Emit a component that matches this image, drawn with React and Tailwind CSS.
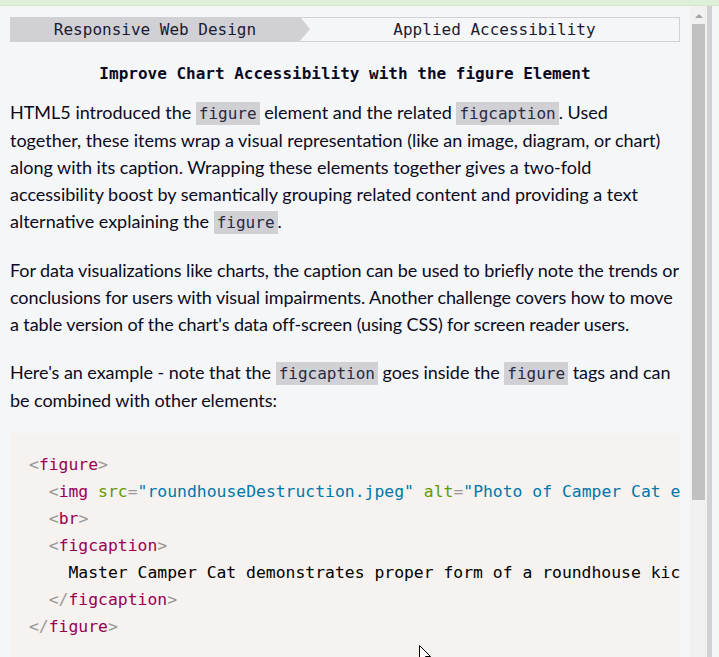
import React from 'react'

const mono = { fontFamily: '"DejaVu Sans Mono", "Liberation Mono", monospace' }

const Code = ({ children }) => (
  <code
    className="bg-[#d0d0d5] text-[#2a2a40] text-[16px] px-[3px] py-[2px] tracking-normal"
    style={mono}
  >
    {children}
  </code>
)

const P = ({ children }) => (
  <span className="text-[#999999]">{children}</span>
)
const Tag = ({ children }) => <span className="text-[#990055]">{children}</span>
const Attr = ({ children }) => <span className="text-[#669900]">{children}</span>
const Val = ({ children }) => <span className="text-[#0077aa]">{children}</span>

const App = () => {
  return (
    <div className="relative h-[657px] w-[719px] overflow-hidden bg-[#f5f6f7] flex flex-col">
      <div className="h-[6px] bg-[#dff0d8] border-b border-[#d3e8c8]" />
      <div className="flex flex-1 min-h-0">
        <main className="w-[690px] px-[10px] pt-[11px] overflow-hidden text-[#0a0a23]">
          {/* Breadcrumb */}
          <nav className="flex h-[25px] text-[16px]" style={mono}>
            <div className="relative w-[290px] bg-[#d0d0d5] flex items-center justify-center text-[#1b1b32]">
              <span>Responsive Web Design</span>
              <span className="absolute right-[-10px] top-0 h-0 w-0 border-y-[12.5px] border-y-transparent border-l-[10px] border-l-[#d0d0d5]" />
            </div>
            <div className="flex-1 border-y border-r border-[#d0d0d5] flex items-center justify-center pl-[10px] text-[#1b1b32]">
              <span>Applied Accessibility</span>
            </div>
          </nav>

          {/* Title */}
          <h1
            className="mt-[20px] text-center text-[16px] leading-[24px] font-bold"
            style={mono}
          >
            Improve Chart Accessibility with the figure Element
          </h1>

          {/* Description */}
          <div
            className="mt-[13px] text-[18px] leading-[27px]"
            style={{ fontFamily: 'Lato, "Noto Sans", sans-serif' }}
          >
            <p className="mb-[21px]">
              HTML5 introduced the <Code>figure</Code> element and the related <Code>figcaption</Code>. Used together, these items wrap a visual representation (like an image, diagram, or chart) along with its caption. Wrapping these elements together gives a two-fold accessibility boost by semantically grouping related content and providing a text alternative explaining the <Code>figure</Code>.
            </p>
            <p className="mb-[21px] tracking-[-0.09px]">
              For data visualizations like charts, the caption can be used to briefly note the trends or conclusions for users with visual impairments. Another challenge covers how to move a table version of the chart's data off-screen (using CSS) for screen reader users.
            </p>
            <p className="mb-[19px] tracking-[-0.05px]">
              Here's an example - note that the <Code>figcaption</Code> goes inside the <Code>figure</Code> tags and can be combined with other elements:
            </p>
          </div>

          {/* Code example */}
          <pre
            className="bg-[#f5f2f0] pt-[18px] pb-[18px] pl-[19px] overflow-hidden whitespace-pre text-[16.4px] leading-[27px] text-black"
            style={mono}
          >
            <P>&lt;</P><Tag>figure</Tag><P>&gt;</P>{'\n'}
            {'  '}<P>&lt;</P><Tag>img</Tag> <Attr>src</Attr><P>=</P><Val>"roundhouseDestruction.jpeg"</Val> <Attr>alt</Attr><P>=</P><Val>"Photo of Camper Cat executing a roundhouse kick"</Val><P>&gt;</P>{'\n'}
            {'  '}<P>&lt;</P><Tag>br</Tag><P>&gt;</P>{'\n'}
            {'  '}<P>&lt;</P><Tag>figcaption</Tag><P>&gt;</P>{'\n'}
            {'    '}Master Camper Cat demonstrates proper form of a roundhouse kick.{'\n'}
            {'  '}<P>&lt;/</P><Tag>figcaption</Tag><P>&gt;</P>{'\n'}
            <P>&lt;/</P><Tag>figure</Tag><P>&gt;</P>{'\n'}
          </pre>
        </main>

        {/* Scrollbar */}
        <div className="w-[17px] bg-[#f1f1f1] flex flex-col items-center">
          <div className="h-[18px] flex items-center justify-center">
            <span className="h-0 w-0 border-x-[4px] border-x-transparent border-b-[4px] border-b-[#a3a3a3] mt-[2px]" />
          </div>
          <div className="w-[13px] h-[476px] bg-[#c1c1c1]" />
        </div>
        <div className="w-[5px] bg-[#d0d0d5]" />
        <div className="flex-1 bg-[#f5f6f7]" />
      </div>

      {/* Mouse pointer */}
      <svg
        className="absolute left-[419px] top-[645px]"
        width="13"
        height="20"
        viewBox="0 0 13 20"
      >
        <path
          d="M0.5 0.5 L0.5 16 L4 12.5 L6.5 18.5 L9 17.5 L6.5 11.5 L11.5 11.5 Z"
          fill="#ffffff"
          stroke="#000000"
          strokeWidth="1"
        />
      </svg>
    </div>
  )
}

export default App
